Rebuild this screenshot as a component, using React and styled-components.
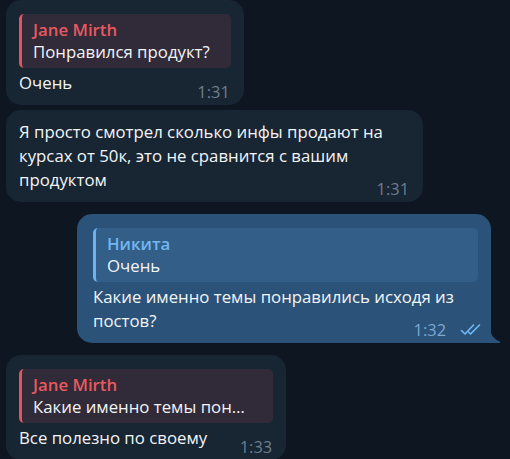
import React from 'react';
import styled, { createGlobalStyle } from 'styled-components';

const GlobalStyle = createGlobalStyle`
  html, body {
    margin: 0;
    background: #0e1621;
  }
  body {
    font-family: 'Open Sans', 'Noto Sans', sans-serif;
    -webkit-font-smoothing: antialiased;
  }
  * {
    box-sizing: border-box;
  }
`;

const Feed = styled.div`
  display: flex;
  flex-direction: column;
  gap: 12px;
  padding: 0 19px 0 6px;
  width: 510px;
  height: 459px;
  overflow: hidden;
`;

const Group = styled.div`
  display: flex;
  flex-direction: column;
  align-items: ${p => (p.$out ? 'flex-end' : 'flex-start')};
  gap: 5px;
`;

const Bubble = styled.div`
  position: relative;
  max-width: ${p => (p.$out ? '414px' : '417px')};
  padding: ${p => (p.$out ? '10px 13px 10px 16px' : '10px 13px 10px 13px')};
  border-radius: 15px;
  background: ${p => (p.$out ? '#2b5278' : '#182533')};
  ${p => p.$tail && 'border-bottom-right-radius: 0;'}
`;

const Tail = styled.svg`
  position: absolute;
  right: -10px;
  bottom: 0;
  width: 11px;
  height: 17px;
`;

const Reply = styled.div`
  margin: 4px 0 3px;
  padding: 5px 21px 5px 11px;
  border-left: 3px solid ${p => p.$accent};
  border-radius: 5px;
  background: ${p => p.$bg};
  line-height: 22px;
  font-size: 16.8px;
  ${p => p.$clip && 'width: 0; min-width: 100%; padding-right: 25px;'}
`;

const ReplyName = styled.div`
  font-weight: 600;
  color: ${p => p.$color};
`;

const ReplyText = styled.div`
  color: #f2f4f6;
  white-space: nowrap;
  overflow: hidden;
  text-overflow: ellipsis;
`;

const Body = styled.div`
  display: grid;
`;

const Text = styled.div`
  grid-area: 1 / 1;
  font-size: 16.8px;
  line-height: 24px;
  color: #f3f5f7;
`;

const Spacer = styled.span`
  display: inline-block;
  width: ${p => p.$w}px;
  height: 1px;
`;

const Meta = styled.div`
  grid-area: 1 / 1;
  justify-self: end;
  align-self: end;
  display: flex;
  align-items: center;
  gap: 14px;
  margin: 0 ${p => (p.$out ? '-5px' : '1px')} -4px 0;
  font-size: 16.4px;
  line-height: 15px;
  color: ${p => (p.$out ? '#7da8d3' : '#6d7f8f')};
`;

const Checks = () => (
  <svg width="23" height="13" viewBox="0 0 23 13" fill="none" stroke="#6fb9f7" strokeWidth="1.6" strokeLinecap="round" strokeLinejoin="round">
    <path d="M1.5 7.5 L5 11 L13.5 2" />
    <path d="M8.5 9 L10.5 11 L19.5 2" />
  </svg>
);

const redReply = { accent: '#e0555e', bg: '#312a38', name: '#e8595f' };
const blueReply = { accent: '#6ab3f3', bg: '#325e87', name: '#72b6f0' };

const Message = ({ out, tail, reply, clip, text, time }) => {
  const r = out ? blueReply : redReply;
  return (
    <Bubble $out={out} $tail={tail}>
      {reply && (
        <Reply $accent={r.accent} $bg={r.bg} $clip={clip}>
          <ReplyName $color={r.name}>{reply.name}</ReplyName>
          <ReplyText>{reply.text}</ReplyText>
        </Reply>
      )}
      <Body>
        <Text>
          {text}
          <Spacer $w={out ? 82 : 66} />
        </Text>
        <Meta $out={out}>
          <span>{time}</span>
          {out && <Checks />}
        </Meta>
      </Body>
      {tail && (
        <Tail viewBox="0 0 11 17">
          <path d="M0 0 C0 8 3 12.5 9.3 15.3 C10.6 15.9 10.4 17 9.2 17 L0 17 Z" fill="#2b5278" />
        </Tail>
      )}
    </Bubble>
  );
};

export default function App() {
  return (
    <>
      <GlobalStyle />
      <Feed>
        <Group>
          <Message
            reply={{ name: 'Jane Mirth', text: 'Понравился продукт?' }}
            text="Очень"
            time="1:31"
          />
          <Message
            text="Я просто смотрел сколько инфы продают на курсах от 50к, это не сравнится с вашим продуктом"
            time="1:31"
          />
        </Group>
        <Group $out>
          <Message
            out
            tail
            reply={{ name: 'Никита', text: 'Очень' }}
            text="Какие именно темы понравились исходя из постов?"
            time="1:32"
          />
        </Group>
        <Group>
          <Message
            clip
            reply={{ name: 'Jane Mirth', text: 'Какие именно темы понравились исходя из постов?' }}
            text="Все полезно по своему"
            time="1:33"
          />
        </Group>
      </Feed>
    </>
  );
}
